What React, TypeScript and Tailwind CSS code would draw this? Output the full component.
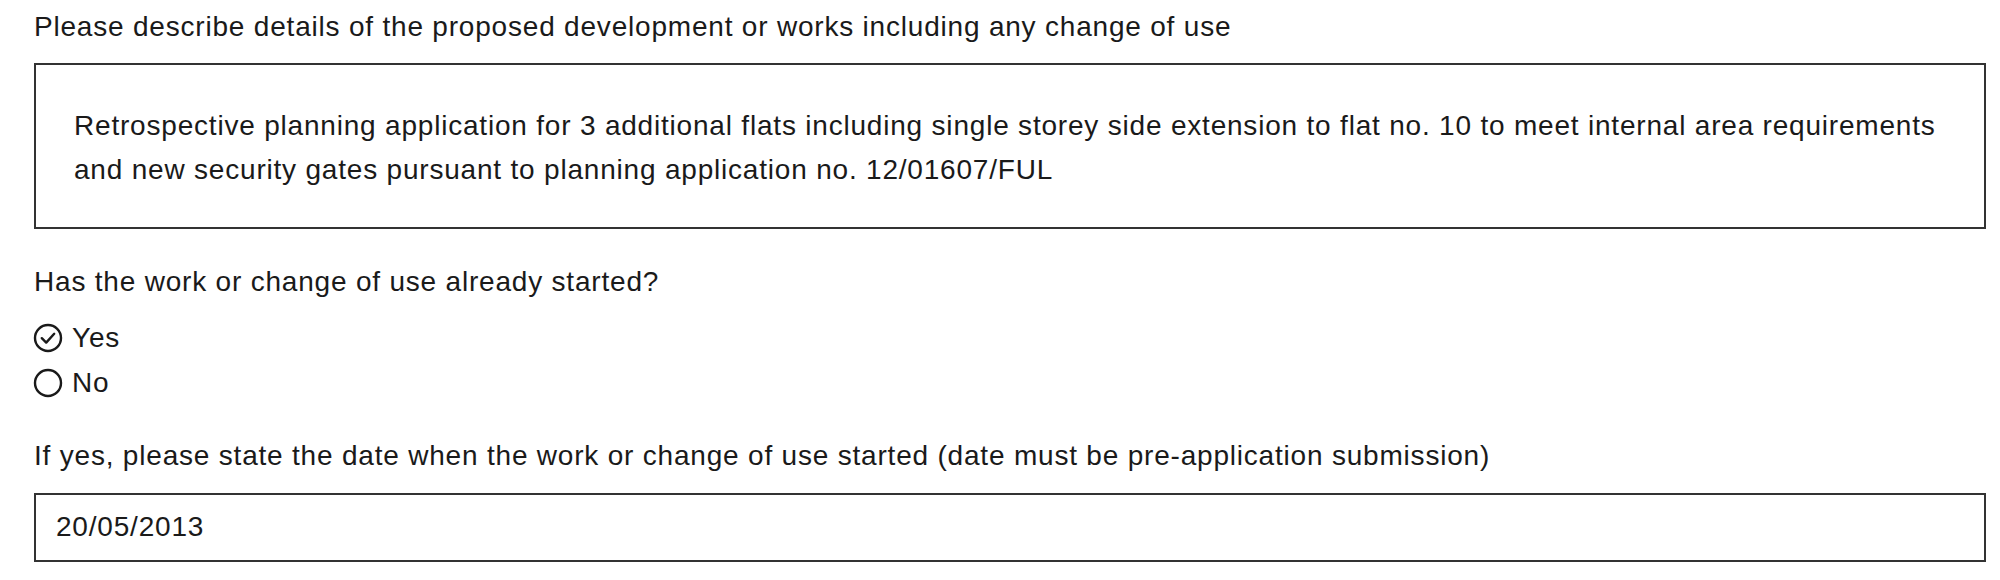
import React from "react";

function Radio({ checked, label }: { checked?: boolean; label: string }) {
  return (
    <div className="flex h-[32px] items-center">
      <svg width="30" height="30" viewBox="0 0 30 30" className="-ml-[1px] mr-[9px] shrink-0">
        <circle cx="15" cy="15" r="13" fill="none" stroke="#1a1a1a" strokeWidth="2.4" />
        {checked && (
          <path d="M8.8 15.2 L13.2 19.6 L21.2 10.8" fill="none" stroke="#1a1a1a" strokeWidth="2.4" strokeLinecap="round" strokeLinejoin="round" />
        )}
      </svg>
      <span className="leading-[32px]">{label}</span>
    </div>
  );
}

export default function App() {
  return (
    <div
      className="min-h-[580px] w-[2000px] bg-white pl-[34px] pr-[14px] text-[28px] tracking-[0.8px] text-[#1a1a1a]"
      style={{ fontFamily: '"Liberation Sans", Arial, sans-serif' }}
    >
      <div className="pt-[11px] leading-[32px]">
        Please describe details of the proposed development or works including any change of use
      </div>
      <div className="mt-[20px] border-2 border-[#333333] pb-[35px] pl-[38px] pr-[16px] pt-[39px] leading-[44px]">
        Retrospective planning application for 3 additional flats including single storey side extension to flat no. 10 to meet internal area requirements
        <br />
        and new security gates pursuant to planning application no. 12/01607/FUL
      </div>
      <div className="mt-[37px] leading-[32px]">Has the work or change of use already started?</div>
      <div className="mt-[24px] flex flex-col gap-[13px]">
        <Radio checked label="Yes" />
        <Radio label="No" />
      </div>
      <div className="mt-[41px] leading-[32px]">
        If yes, please state the date when the work or change of use started (date must be pre-application submission)
      </div>
      <div className="mt-[21px] border-2 border-[#333333] pb-[17px] pl-[20px] pt-[16px] leading-[32px]">20/05/2013</div>
    </div>
  );
}
